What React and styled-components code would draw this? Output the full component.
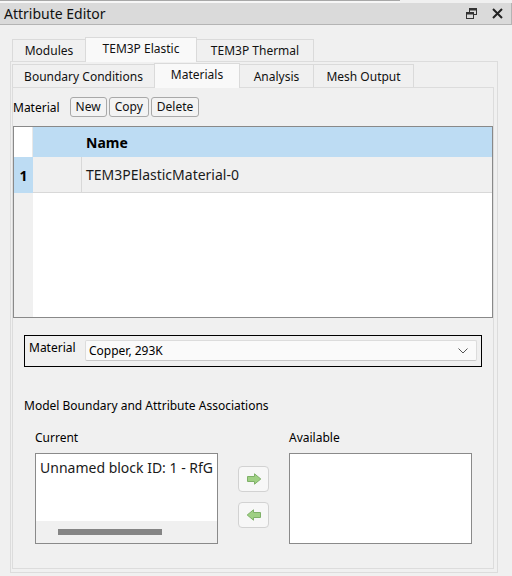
import React from 'react';
import styled, { createGlobalStyle } from 'styled-components';

const GlobalStyle = createGlobalStyle`
    html, body {
        margin: 0;
        padding: 0;
        background: #f0f0f0;
    }
    body {
        font-family: "Noto Sans", "Open Sans", "DejaVu Sans", sans-serif;
        font-size: 12px;
        color: #000;
    }
`;

const Window = styled.div`
    width: 512px;
    height: 576px;
    background: #f0f0f0;
    display: flex;
    flex-direction: column;
    overflow: hidden;
`;

const TopStrip = styled.div`
    height: 2px;
    border-top: 1px solid #a8a8a8;
    background: #f7f7f7;
    width: 400px;
`;

const TitleBar = styled.div`
    height: 21px;
    background: #dadada;
    border-bottom: 1px solid #b4b4b4;
    border-right: 1px solid #b4b4b4;
    display: flex;
    align-items: center;
    padding-left: 4px;
    padding-right: 8px;
`;

const Title = styled.span`
    font-size: 14px;
    flex: 1;
    color: #111;
`;

const TitleButtons = styled.div`
    display: flex;
    align-items: center;
    gap: 15px;
`;

const Body = styled.div`
    flex: 1;
    display: flex;
    flex-direction: column;
    padding: 12px 14px 3px 10px;
`;

const TabBar = styled.div`
    display: flex;
    align-items: flex-end;
    padding-left: ${(p) => p.$indent}px;
    height: 24px;
    flex-shrink: 0;
`;

const Tab = styled.div`
    width: ${(p) => p.$w}px;
    height: ${(p) => (p.$active ? 25 : p.$h)}px;
    display: flex;
    align-items: center;
    justify-content: center;
    box-sizing: border-box;
    border: 1px solid #dadada;
    border-bottom: none;
    margin-right: -1px;
    background: ${(p) => (p.$active ? '#f9f9f9' : '#f0f0f0')};
    font-size: 12px;
    color: #111;
    padding-bottom: ${(p) => (p.$active ? 4 : 0)}px;
    position: relative;
    z-index: ${(p) => (p.$active ? 1 : 0)};
    margin-bottom: ${(p) => (p.$active ? -1 : 0)}px;
`;

const Pane = styled.div`
    flex: 1;
    border: 1px solid #dcdcdc;
    background: #f0f0f0;
    display: flex;
    flex-direction: column;
    padding: ${(p) => p.$pad};
`;

const Toolbar = styled.div`
    display: flex;
    align-items: center;
    gap: 2px;
    margin-top: 9px;
    height: 20px;
`;

const ToolLabel = styled.span`
    font-size: 12px;
    margin-right: 8px;
`;

const ToolButton = styled.button`
    height: 20px;
    padding: 0 5px;
    font-family: inherit;
    font-size: 12px;
    color: #111;
    background: #f3f3f3;
    border: 1px solid #a9a9a9;
    border-radius: 3px;
    line-height: 1;
`;

const Table = styled.div`
    margin-top: 9px;
    height: 192px;
    border: 1px solid #898989;
    background: #fff;
    display: grid;
    grid-template-columns: 19px 48px 1fr;
    grid-template-rows: 30px 36px 1fr;
    box-sizing: border-box;
`;

const Corner = styled.div`
    background: #fff;
    border-right: 1px solid #e8e8e8;
`;

const HeadCell = styled.div`
    background: #bddcf3;
    font-weight: bold;
    font-size: 14px;
    display: flex;
    align-items: center;
    padding-left: 5px;
`;

const RowHead = styled.div`
    background: #bddcf3;
    font-weight: bold;
    font-size: 14px;
    display: flex;
    align-items: center;
    justify-content: center;
`;

const Cell = styled.div`
    background: #f0f0f0;
    border-bottom: 1px solid #d8d8d8;
    border-left: ${(p) => (p.$divider ? '1px solid #d8d8d8' : 'none')};
    font-size: 14px;
    display: flex;
    align-items: center;
    padding-left: 4px;
    color: #1a1a1a;
`;

const RowGutter = styled.div`
    background: #f0f0f0;
`;

const Empty = styled.div`
    grid-column: 2 / 4;
    background: #fff;
`;

const ComboGroup = styled.div`
    margin: 17px 11px 0 11px;
    height: 32px;
    border: 1px solid #000;
    box-sizing: border-box;
    display: flex;
    align-items: flex-start;
    padding: 4px 4px 0 4px;
`;

const ComboLabel = styled.span`
    font-size: 12px;
    width: 56px;
    line-height: 16px;
`;

const Combo = styled.div`
    flex: 1;
    height: 21px;
    box-sizing: border-box;
    background: #fafafa;
    border: 1px solid #dcdcdc;
    border-bottom-color: #c8c8c8;
    border-radius: 2px;
    display: flex;
    align-items: center;
    padding: 0 8px 0 3px;
    font-size: 12px;
`;

const ComboText = styled.span`
    flex: 1;
`;

const SectionTitle = styled.div`
    margin: 30px 0 0 11px;
    font-size: 12px;
`;

const Assoc = styled.div`
    display: flex;
    margin: 15px 0 0 22px;
`;

const ListColumn = styled.div`
    display: flex;
    flex-direction: column;
    width: 183px;
`;

const ListLabel = styled.div`
    font-size: 12px;
    height: 24px;
    line-height: 18px;
`;

const ListBox = styled.div`
    height: 91px;
    box-sizing: border-box;
    border: 1px solid #8a8a8a;
    background: #fff;
    display: flex;
    flex-direction: column;
    overflow: hidden;
`;

const ListItem = styled.div`
    flex: 1;
    font-size: 14px;
    white-space: nowrap;
    padding: 4px 0 0 4px;
    color: #1a1a1a;
`;

const HScroll = styled.div`
    height: 22px;
    background: #f0f0f0;
    display: flex;
    align-items: center;
    padding-left: 22px;
`;

const Thumb = styled.div`
    width: 104px;
    height: 6px;
    background: #858585;
`;

const Mover = styled.div`
    width: 71px;
    display: flex;
    flex-direction: column;
    align-items: center;
    gap: 10px;
    padding-top: 37px;
`;

const ArrowButton = styled.div`
    width: 31px;
    height: 26px;
    box-sizing: border-box;
    border: 1px solid #d2d2d2;
    border-radius: 4px;
    background: #f7f7f7;
    display: flex;
    align-items: center;
    justify-content: center;
`;

function FloatIcon() {
    return (
        <svg width="11" height="11" viewBox="0 0 11 11">
            <rect x="3.5" y="0.5" width="7" height="6" fill="none" stroke="#333" strokeWidth="1" />
            <rect x="3.5" y="0.5" width="7" height="2" fill="#333" />
            <rect x="0.5" y="4.5" width="7" height="6" fill="#dadada" stroke="#333" strokeWidth="1" />
            <rect x="0.5" y="4.5" width="7" height="2" fill="#333" />
        </svg>
    );
}

function CloseIcon() {
    return (
        <svg width="11" height="11" viewBox="0 0 11 11">
            <path d="M1 1 L10 10 M10 1 L1 10" stroke="#222" strokeWidth="2" />
        </svg>
    );
}

function Arrow({ left }) {
    return (
        <svg width="16" height="12" viewBox="0 0 16 12" style={{ transform: left ? 'scaleX(-1)' : 'none' }}>
            <path d="M1.5 3.5 H8.5 V0.8 L14.8 6 L8.5 11.2 V8.5 H1.5 Z" fill="#9fd083" stroke="#7fb068" strokeWidth="1" strokeLinejoin="round" />
        </svg>
    );
}

export default function App() {
    return (
        <Window>
            <GlobalStyle />
            <TopStrip />
            <TitleBar>
                <Title>Attribute Editor</Title>
                <TitleButtons>
                    <FloatIcon />
                    <CloseIcon />
                </TitleButtons>
            </TitleBar>

            <Body>
                <TabBar $indent={2}>
                    <Tab $h={22} $w={74}>Modules</Tab>
                    <Tab $h={22} $w={112} $active>TEM3P Elastic</Tab>
                    <Tab $h={22} $w={118}>TEM3P Thermal</Tab>
                </TabBar>
                <Pane $pad="1px 3px 3px 1px">
                    <TabBar $indent={0}>
                        <Tab $h={23} $w={143}>Boundary Conditions</Tab>
                        <Tab $h={23} $w={86} $active>Materials</Tab>
                        <Tab $h={23} $w={75}>Analysis</Tab>
                        <Tab $h={23} $w={101}>Mesh Output</Tab>
                    </TabBar>
                    <Pane $pad="0">
                        <Toolbar>
                            <ToolLabel>Material</ToolLabel>
                            <ToolButton>New</ToolButton>
                            <ToolButton>Copy</ToolButton>
                            <ToolButton>Delete</ToolButton>
                        </Toolbar>

                        <Table>
                            <Corner />
                            <HeadCell />
                            <HeadCell>Name</HeadCell>
                            <RowHead>1</RowHead>
                            <Cell />
                            <Cell $divider>TEM3PElasticMaterial-0</Cell>
                            <RowGutter />
                            <Empty />
                        </Table>

                        <ComboGroup>
                            <ComboLabel>Material</ComboLabel>
                            <Combo>
                                <ComboText>Copper, 293K</ComboText>
                                <svg width="10" height="6" viewBox="0 0 10 6">
                                    <path d="M0.5 0.5 L5 5 L9.5 0.5" fill="none" stroke="#555" strokeWidth="1" />
                                </svg>
                            </Combo>
                        </ComboGroup>

                        <SectionTitle>Model Boundary and Attribute Associations</SectionTitle>

                        <Assoc>
                            <ListColumn>
                                <ListLabel>Current</ListLabel>
                                <ListBox>
                                    <ListItem>Unnamed block ID: 1 - RfG</ListItem>
                                    <HScroll>
                                        <Thumb />
                                    </HScroll>
                                </ListBox>
                            </ListColumn>
                            <Mover>
                                <ArrowButton><Arrow /></ArrowButton>
                                <ArrowButton><Arrow left /></ArrowButton>
                            </Mover>
                            <ListColumn>
                                <ListLabel>Available</ListLabel>
                                <ListBox />
                            </ListColumn>
                        </Assoc>
                    </Pane>
                </Pane>
            </Body>
        </Window>
    );
}
